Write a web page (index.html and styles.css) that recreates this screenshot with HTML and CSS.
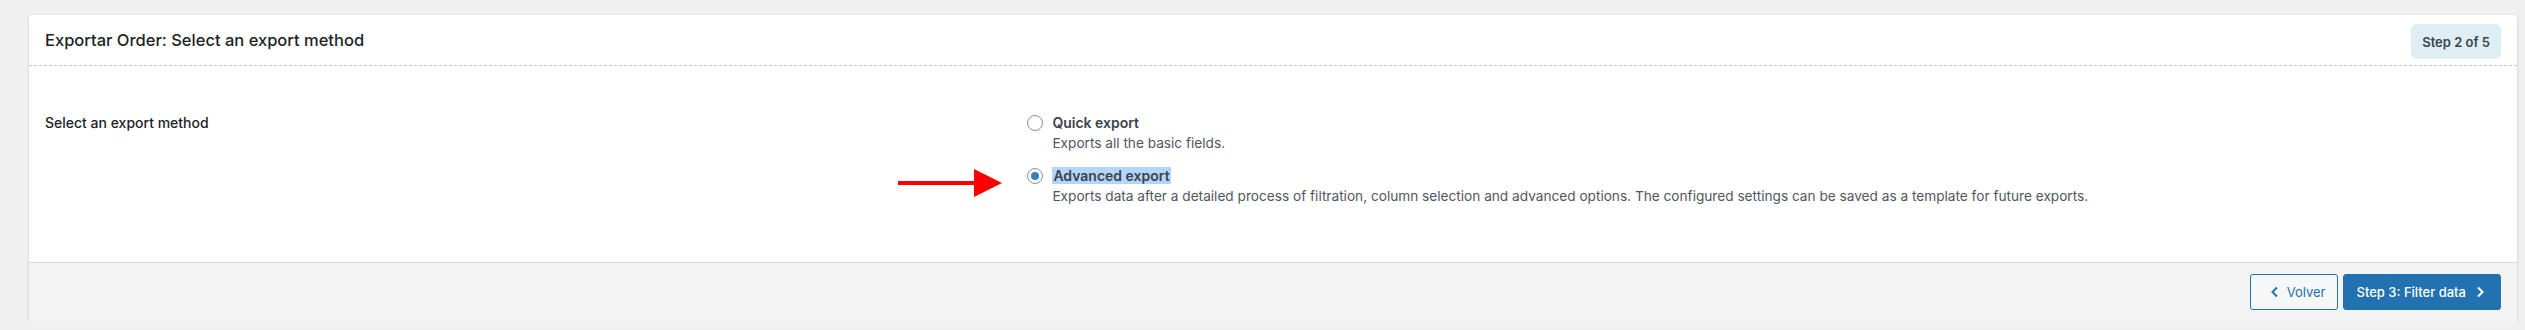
FILE: index.html
```html
<!DOCTYPE html>
<html>
  <head>
    <title>Exportar Order</title>
    <link rel="stylesheet" href="styles.css">
  </head>
  <body>
    <div class="wizard">
      <div class="wizard-header">
        <h2 class="wizard-title">Exportar Order: Select an export method</h2>
        <span class="step-badge">Step 2 of 5</span>
      </div>

      <div class="wizard-body">
        <div class="form-row">
          <div class="form-label">Select an export method</div>

          <div class="form-options">
            <label class="option">
              <span class="option-head">
                <input type="radio" name="method" class="radio">
                <span class="option-title">Quick export</span>
              </span>
              <span class="option-desc">Exports all the basic fields.</span>
            </label>

            <label class="option">
              <svg class="pointer-arrow" width="104" height="28" viewBox="0 0 104 28">
                <line x1="0" y1="14" x2="78" y2="14" stroke="#f00" stroke-width="4" />
                <polygon points="76,0 104,14 76,28" fill="#f00" />
              </svg>
              <span class="option-head">
                <input type="radio" name="method" class="radio" checked>
                <span class="option-title"><span class="highlight">Advanced export</span></span>
              </span>
              <span class="option-desc">Exports data after a detailed process of filtration, column selection and advanced options. The configured settings can be saved as a template for future exports.</span>
            </label>
          </div>
        </div>
      </div>

      <div class="wizard-footer">
        <button class="btn btn-secondary">
          <svg width="12" height="12" viewBox="0 0 12 12">
            <polyline points="8,1.5 3.5,6 8,10.5" fill="none" stroke="currentColor" stroke-width="2" />
          </svg>
          Volver
        </button>
        <button class="btn btn-primary">
          Step 3: Filter data
          <svg width="12" height="12" viewBox="0 0 12 12">
            <polyline points="4,1.5 8.5,6 4,10.5" fill="none" stroke="currentColor" stroke-width="2" />
          </svg>
        </button>
      </div>
    </div>
  </body>
</html>
```

FILE: styles.css
```css
* {
  box-sizing: border-box;
  margin: 0;
  padding: 0;
}

body {
  background: #f0f0f0;
  padding: 15px 8px 0 29px;
  font-family: 'Inter', 'Liberation Sans', sans-serif;
  color: #1d2327;
}

.wizard {
  background: white;
  box-shadow: 0 1px 3px rgba(0, 0, 0, 0.16);
}

.wizard-header {
  display: flex;
  justify-content: space-between;
  align-items: center;
  height: 51px;
  padding: 3px 16px 0;
  border-bottom: 1px dashed #c8c8c8;
}

.wizard-title {
  font-size: 16.5px;
  font-weight: 500;
  color: #1d2327;
  margin-top: -4px;
}

.step-badge {
  display: flex;
  align-items: center;
  height: 35px;
  padding: 0 11px;
  background: #ddeef4;
  border-radius: 6px;
  font-size: 13px;
  font-weight: 600;
  color: #3c434a;
}

.wizard-body {
  padding: 47px 16px 56px;
}

.form-row {
  display: grid;
  grid-template-columns: 40% 1fr;
}

.form-label {
  font-size: 14px;
  font-weight: 500;
  line-height: 20px;
}

.form-options {
  display: flex;
  flex-direction: column;
  gap: 13px;
}

.option {
  position: relative;
  display: flex;
  flex-direction: column;
}

.option-head {
  display: flex;
  align-items: center;
  gap: 9px;
}

.radio {
  appearance: none;
  width: 16px;
  height: 16px;
  border: 1px solid #8c8f94;
  border-radius: 50%;
  background: white;
  display: flex;
  justify-content: center;
  align-items: center;
}

.radio:checked::before {
  content: '';
  width: 8px;
  height: 8px;
  border-radius: 50%;
  background: #3582c4;
}

.option-title {
  font-size: 14px;
  font-weight: 600;
  line-height: 20px;
  color: #3c434a;
}

.highlight {
  background: #b4d5fe;
  padding: 0 1px;
}

.option-desc {
  padding-left: 25px;
  font-size: 13.65px;
  line-height: 20px;
  color: #50575e;
}

.pointer-arrow {
  position: absolute;
  left: -129px;
  top: 3px;
}

.wizard-footer {
  display: flex;
  justify-content: flex-end;
  gap: 5px;
  height: 60px;
  padding: 11px 16px 0;
  background: #f3f3f3;
  border-top: 1px solid #dcdcde;
}

.btn {
  display: flex;
  align-items: center;
  gap: 6px;
  height: 36px;
  border-radius: 3px;
  font-family: 'Inter', 'Liberation Sans', sans-serif;
  font-size: 13px;
  cursor: pointer;
}

.btn-secondary {
  padding: 0 12px 0 18px;
  background: #f6f7f7;
  border: 1px solid #2271b1;
  color: #2271b1;
}

.btn-primary {
  padding: 0 14px 0 12px;
  gap: 8px;
  background: #2271b1;
  border: 1px solid #2271b1;
  color: white;
  font-weight: 500;
}
```
